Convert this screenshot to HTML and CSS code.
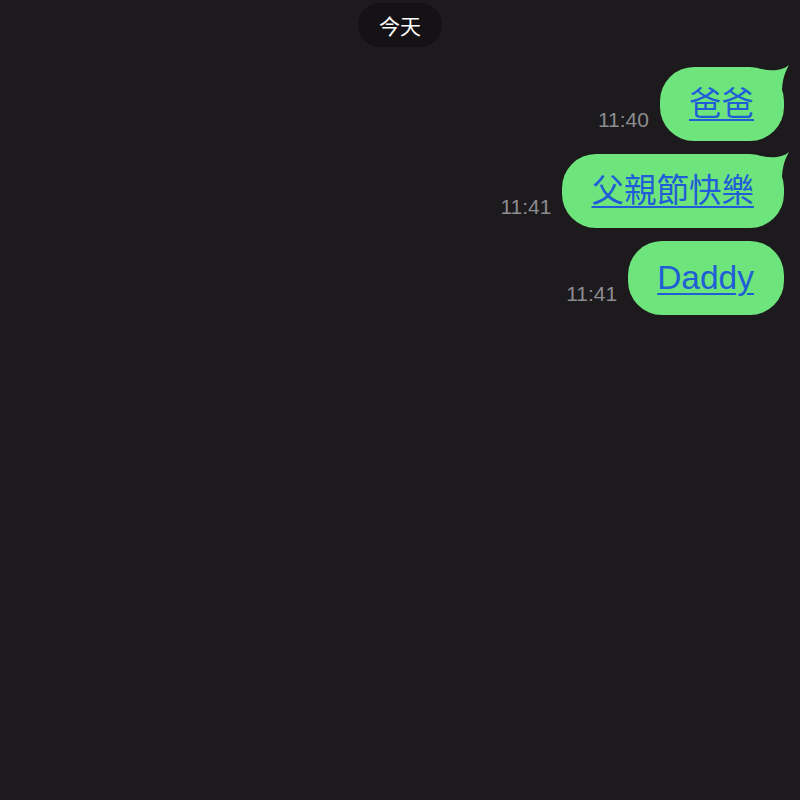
FILE: index.html
```html
<!DOCTYPE html>
<html lang="zh-Hant">
<head>
<meta charset="utf-8">
<link rel="stylesheet" href="styles.css">
</head>
<body>
<div class="chat">
  <div class="date-row"><span class="date-pill">今天</span></div>
  <div class="messages">
    <div class="row">
      <span class="time">11:40</span>
      <div class="bubble tailed">
        <a class="msg" href="#">爸爸</a>
        <svg class="tail" viewBox="0 0 30 30" width="30" height="30"><path d="M0,6 C12,8 22,8 29,2 C25,9 22,17 22,30 L0,30 Z"/></svg>
      </div>
    </div>
    <div class="row">
      <span class="time">11:41</span>
      <div class="bubble tailed">
        <a class="msg" href="#">父親節快樂</a>
        <svg class="tail" viewBox="0 0 30 30" width="30" height="30"><path d="M0,6 C12,8 22,8 29,2 C25,9 22,17 22,30 L0,30 Z"/></svg>
      </div>
    </div>
    <div class="row">
      <span class="time">11:41</span>
      <div class="bubble">
        <a class="msg latin" href="#">Daddy</a>
      </div>
    </div>
  </div>
</div>
</body>
</html>
```

FILE: styles.css
```css
html, body {
  margin: 0;
  padding: 0;
  background: #1c1a1d;
  width: 800px;
  height: 800px;
  overflow: hidden;
}
.chat {
  display: flex;
  flex-direction: column;
  font-family: "Liberation Sans", "Noto Sans CJK TC", sans-serif;
}
.date-row {
  display: flex;
  justify-content: center;
  padding-top: 3px;
}
.date-pill {
  display: flex;
  align-items: center;
  justify-content: center;
  width: 84px;
  height: 44px;
  border-radius: 22px;
  background: #141214;
  color: #ffffff;
  font-family: "Noto Sans CJK TC", sans-serif;
  font-size: 21px;
}
.messages {
  display: flex;
  flex-direction: column;
  align-items: flex-end;
  padding: 20px 16px 0 0;
  gap: 13px;
}
.row {
  display: flex;
  align-items: flex-end;
  gap: 11px;
}
.time {
  color: #8d8c90;
  font-size: 21px;
  line-height: 24px;
  margin-bottom: 9px;
}
.bubble {
  position: relative;
  display: flex;
  align-items: center;
  height: 74px;
  padding: 0 30px 0 29px;
  border-radius: 34px;
  background: #6ee57c;
}
.msg {
  color: #1f5ed6;
  text-decoration: underline;
  text-underline-offset: 4px;
  text-decoration-thickness: 2px;
  font-size: 32.5px;
  line-height: 40px;
}
.msg.latin {
  font-size: 33.5px;
}
.tail {
  position: absolute;
  right: -6px;
  top: -4px;
  fill: #6ee57c;
}
```
